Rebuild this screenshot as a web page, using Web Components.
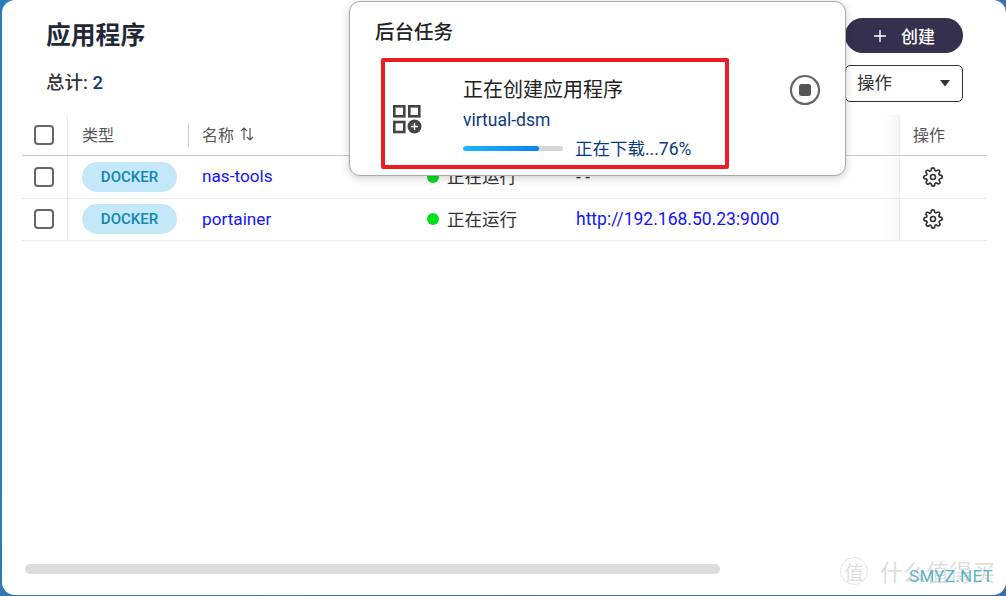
<!DOCTYPE html>
<html lang="zh">
<head>
<meta charset="utf-8">
<title>应用程序</title>
<style>
  html, body { margin: 0; height: 596px; overflow: hidden; }
  body {
    background: linear-gradient(100deg, #2a7db6 0%, #3a6fb2 70%, #3d6cae 100%);
    font-family: Roboto, "Noto Sans CJK SC", sans-serif;
  }
</style>
</head>
<body>
<app-window>
  <app-head></app-head>
  <app-table>
    <app-row status="正在运行" url="- -" plain>nas-tools</app-row>
    <app-row status="正在运行" url="http://192.168.50.23:9000">portainer</app-row>
  </app-table>
  <task-popover title-text="后台任务">
    <task-item label="virtual-dsm" progress="76" state="正在下载...76%">正在创建应用程序</task-item>
  </task-popover>
  <water-mark></water-mark>
</app-window>

<script>
  // 复选框，表头和每一行都用
  class AppCheck extends HTMLElement {
    constructor() {
      super();
      this.attachShadow({ mode: "open" });
      this.shadowRoot.innerHTML = `
        <style>
          :host { display: block; width: 20px; height: 20px; box-sizing: border-box;
                  border: 2px solid #666; border-radius: 4px; background: #fff; }
        </style>`;
    }
  }
  customElements.define("app-check", AppCheck);

  class AppWindow extends HTMLElement {
    constructor() {
      super();
      this.attachShadow({ mode: "open" });
      this.shadowRoot.innerHTML = `
        <style>
          :host { display: flex; flex-direction: column; position: relative; box-sizing: border-box;
                  height: 595px; margin-left: 2px; padding-top: 18px;
                  background: #fff; border-radius: 13px; overflow: hidden; }
          .grow { flex: 1; }
          .scroll { width: 695px; height: 10px; margin: 0 0 21px 23px;
                    background: #dcdcdc; border-radius: 5px; }
        </style>
        <slot></slot>
        <div class="grow"></div>
        <div class="scroll"></div>`;
    }
  }
  customElements.define("app-window", AppWindow);

  class AppHead extends HTMLElement {
    constructor() {
      super();
      this.attachShadow({ mode: "open" });
      this.shadowRoot.innerHTML = `
        <style>
          :host { display: block; padding: 0 43px 0 44px; }
          .line { display: flex; justify-content: space-between; align-items: center; }
          .top { height: 35px; }
          .bottom { height: 37px; margin-top: 12px; margin-bottom: 13px; }
          h1 { margin: 0 0 5px; font-size: 24.8px; font-weight: 700; color: #232838; }
          .total { margin-top: -5px; font-size: 18.5px; font-weight: 500; color: #333; }
          .total b { font-weight: 500; color: #0b3a82; }
          .create { display: flex; align-items: center; justify-content: center; gap: 14px;
                    width: 118px; height: 35px; box-sizing: border-box; border-radius: 18px;
                    background: #35304d; color: #fff; font-size: 17px; font-weight: 500; }
          .select { display: flex; align-items: center; justify-content: space-between;
                    width: 118px; height: 37px; box-sizing: border-box; padding: 0 12px 0 11px;
                    border: 1px solid #333; border-radius: 5px; font-size: 17.5px; color: #333; }
          .select span { margin-top: -5px; }
          svg { display: block; }
        </style>
        <div class="line top">
          <h1>应用程序</h1>
          <div class="create">
            <svg width="14" height="14" viewBox="0 0 14 14"><path d="M7 1v12M1 7h12" stroke="#fff" stroke-width="1.4"/></svg>
            <span>创建</span>
          </div>
        </div>
        <div class="line bottom">
          <div class="total">总计: <b>2</b></div>
          <div class="select">
            <span>操作</span>
            <svg width="10" height="7" viewBox="0 0 10 7"><path d="M0 0h10L5 6.5z" fill="#333"/></svg>
          </div>
        </div>`;
    }
  }
  customElements.define("app-head", AppHead);

  const COLUMNAS = "46px 120px 225px 149px 337px 88px";

  class AppTable extends HTMLElement {
    constructor() {
      super();
      this.attachShadow({ mode: "open" });
      this.shadowRoot.innerHTML = `
        <style>
          :host { display: block; margin: 0 19px 0 20px; }
          .header { display: grid; grid-template-columns: ${COLUMNAS}; height: 41px; box-sizing: border-box;
                    border-bottom: 1px solid #ccc; font-size: 16px; color: #555; }
          .cell { display: flex; align-items: center; padding-left: 14px; padding-bottom: 2px; }
          .check { padding-left: 12px; padding-bottom: 0; border-right: 1px solid #eee; }
          .sep { position: relative; }
          .sep::before { content: ""; position: absolute; left: 0; top: 8px; height: 24px; width: 1px; background: #ccc; }
          .acts { position: relative; border-left: 1px solid #eee; padding-left: 13px; }
          .acts::before { content: ""; position: absolute; left: -21px; top: 0; bottom: 0; width: 20px;
                          background: linear-gradient(90deg, rgba(0,0,0,0), rgba(0,0,0,.035)); }
          svg { margin-left: 5px; }
        </style>
        <div class="header">
          <div class="cell check"><app-check></app-check></div>
          <div class="cell">类型</div>
          <div class="cell sep">名称
            <svg width="16" height="16" viewBox="0 0 16 16" fill="none" stroke="#555" stroke-width="1.2">
              <path d="M5 14V2M2 5l3-3 3 3M11 2v12M8 11l3 3 3-3"/>
            </svg>
          </div>
          <div class="cell"></div>
          <div class="cell"></div>
          <div class="cell acts">操作</div>
        </div>
        <slot></slot>`;
    }
  }
  customElements.define("app-table", AppTable);

  class AppRow extends HTMLElement {
    constructor() {
      super();
      this.attachShadow({ mode: "open" });
    }

    connectedCallback() {
      const estado = this.getAttribute("status");
      const url = this.getAttribute("url");
      const colorUrl = this.hasAttribute("plain") ? "#333" : "#1414ff";
      this.shadowRoot.innerHTML = `
        <style>
          :host { display: grid; grid-template-columns: ${COLUMNAS}; height: 42.5px; box-sizing: border-box;
                  border-bottom: 1px solid #eaeaea; font-size: 17.5px; }
          .cell { display: flex; align-items: center; padding-left: 14px; }
          .check { padding-left: 12px; border-right: 1px solid #eee; }
          .badge { display: flex; align-items: center; justify-content: center; width: 95px; height: 30px;
                   border-radius: 15px; background: #c5e8f8; color: #0f86b8; font-size: 15px; font-weight: 500; }
          .name { color: #1414ff; font-size: 17.2px; padding-bottom: 1px; }
          .status { color: #333; gap: 8px; font-size: 17.5px; }
          .status span:last-child { margin-top: -2px; }
          .dot { width: 12px; height: 12px; border-radius: 50%; background: #00e020; }
          .url { color: ${colorUrl}; }
          .acts { position: relative; border-left: 1px solid #eee; padding-left: 23px; }
          .acts::before { content: ""; position: absolute; left: -21px; top: 0; bottom: 0; width: 20px;
                          background: linear-gradient(90deg, rgba(0,0,0,0), rgba(0,0,0,.025)); }
        </style>
        <div class="cell check"><app-check></app-check></div>
        <div class="cell"><div class="badge">DOCKER</div></div>
        <div class="cell name"><slot></slot></div>
        <div class="cell status"><span class="dot"></span><span>${estado}</span></div>
        <div class="cell url">${url}</div>
        <div class="cell acts">
          <svg width="20" height="20" viewBox="0 0 24 24" fill="none" stroke="#333" stroke-width="2" stroke-linejoin="round">
            <circle cx="12" cy="12" r="3"/>
            <path d="M19.4 15a1.65 1.65 0 0 0 .33 1.82l.06.06a2 2 0 1 1-2.83 2.83l-.06-.06a1.65 1.65 0 0 0-2.8 1.17V21a2 2 0 1 1-4 0v-.09a1.65 1.65 0 0 0-2.8-1.11l-.06.06a2 2 0 1 1-2.83-2.83l.06-.06a1.65 1.65 0 0 0-1.17-2.8H3a2 2 0 1 1 0-4h.09a1.65 1.65 0 0 0 1.11-2.8l-.06-.06a2 2 0 1 1 2.83-2.83l.06.06a1.65 1.65 0 0 0 2.8-1.17V3a2 2 0 1 1 4 0v.09a1.65 1.65 0 0 0 2.8 1.11l.06-.06a2 2 0 1 1 2.83 2.83l-.06.06a1.65 1.65 0 0 0 1.17 2.8H21a2 2 0 1 1 0 4h-.09a1.65 1.65 0 0 0-1.51 1.17z"/>
          </svg>
        </div>`;
    }
  }
  customElements.define("app-row", AppRow);

  // Ventana flotante de tareas, va encima de la tabla
  class TaskPopover extends HTMLElement {
    constructor() {
      super();
      this.attachShadow({ mode: "open" });
    }

    connectedCallback() {
      this.shadowRoot.innerHTML = `
        <style>
          :host { display: block; position: absolute; left: 347px; top: 1px; width: 497px; height: 175px;
                  box-sizing: border-box; background: #fff; border: 1px solid #aaa; border-radius: 11px;
                  box-shadow: 0 2px 8px rgba(0,0,0,.2); padding: 18px 0 0 25px; }
          .title { font-size: 19.5px; font-weight: 500; color: #222; line-height: 26px; height: 38px; }
        </style>
        <div class="title">${this.getAttribute("title-text")}</div>
        <slot></slot>`;
    }
  }
  customElements.define("task-popover", TaskPopover);

  class TaskItem extends HTMLElement {
    constructor() {
      super();
      this.attachShadow({ mode: "open" });
    }

    connectedCallback() {
      const progreso = this.getAttribute("progress");
      this.shadowRoot.innerHTML = `
        <style>
          :host { display: flex; align-items: flex-start; margin-left: 6px; }
          .box { display: flex; width: 348px; height: 111px; box-sizing: border-box; flex: none;
                 border: 4px solid #ed1c24; border-radius: 2px; }
          .icon { margin: 43px 0 0 8px; flex: none; }
          .info { margin-left: 41px; padding-top: 13px; }
          .name { font-size: 20px; line-height: 30px; color: #222; }
          .label { font-size: 17.5px; line-height: 30px; color: #0b3a82; }
          .line { display: flex; align-items: center; margin-top: 1px; height: 24px; }
          .bar { width: 100px; height: 5px; border-radius: 3px; background: #d6d6d6; overflow: hidden; }
          .fill { height: 100%; background: linear-gradient(90deg, #1fb6ff, #0a86f2); border-radius: 3px; }
          .state { margin: -2px 0 0 12px; font-size: 17.5px; color: #0b3a82; white-space: nowrap; }
          .stop { margin: 16px 0 0 60px; flex: none; }
        </style>
        <div class="box">
          <svg class="icon" width="29" height="29" viewBox="0 0 29 29">
            <g fill="none" stroke="#444" stroke-width="2.6">
              <rect x="1.3" y="1.3" width="10" height="10"/>
              <rect x="16.3" y="1.3" width="10" height="10"/>
              <rect x="1.3" y="17" width="10" height="10"/>
            </g>
            <circle cx="21.5" cy="21.5" r="7" fill="#444"/>
            <path d="M21.5 18v7M18 21.5h7" stroke="#fff" stroke-width="1.4"/>
          </svg>
          <div class="info">
            <div class="name"><slot></slot></div>
            <div class="label">${this.getAttribute("label")}</div>
            <div class="line">
              <div class="bar"><div class="fill" style="width:${progreso}%"></div></div>
              <div class="state">${this.getAttribute("state")}</div>
            </div>
          </div>
        </div>
        <svg class="stop" width="32" height="32" viewBox="0 0 32 32">
          <circle cx="16" cy="16" r="14" fill="none" stroke="#666" stroke-width="2.2"/>
          <rect x="10" y="10" width="12" height="12" rx="2.5" fill="#555"/>
        </svg>`;
    }
  }
  customElements.define("task-item", TaskItem);

  // Marca de agua de la esquina
  class WaterMark extends HTMLElement {
    constructor() {
      super();
      this.attachShadow({ mode: "open" });
      this.shadowRoot.innerHTML = `
        <style>
          :host { display: block; position: absolute; left: 838px; top: 556px; width: 166px; height: 36px; }
          .row { display: flex; align-items: center; gap: 12px; height: 30px; color: #dedede; }
          .seal { width: 28px; height: 28px; box-sizing: border-box; border: 1px solid #e4e4e4; border-radius: 50%;
                  display: flex; align-items: center; justify-content: center; font-size: 19px; }
          .text { font-size: 23px; white-space: nowrap; }
          .site { position: absolute; left: 69px; top: 10px; font-size: 17px; letter-spacing: .3px; color: #5cb3c8; }
        </style>
        <div class="row"><span class="seal">值</span><span class="text">什么值得买</span></div>
        <div class="site">SMYZ.NET</div>`;
    }
  }
  customElements.define("water-mark", WaterMark);
</script>
</body>
</html>
